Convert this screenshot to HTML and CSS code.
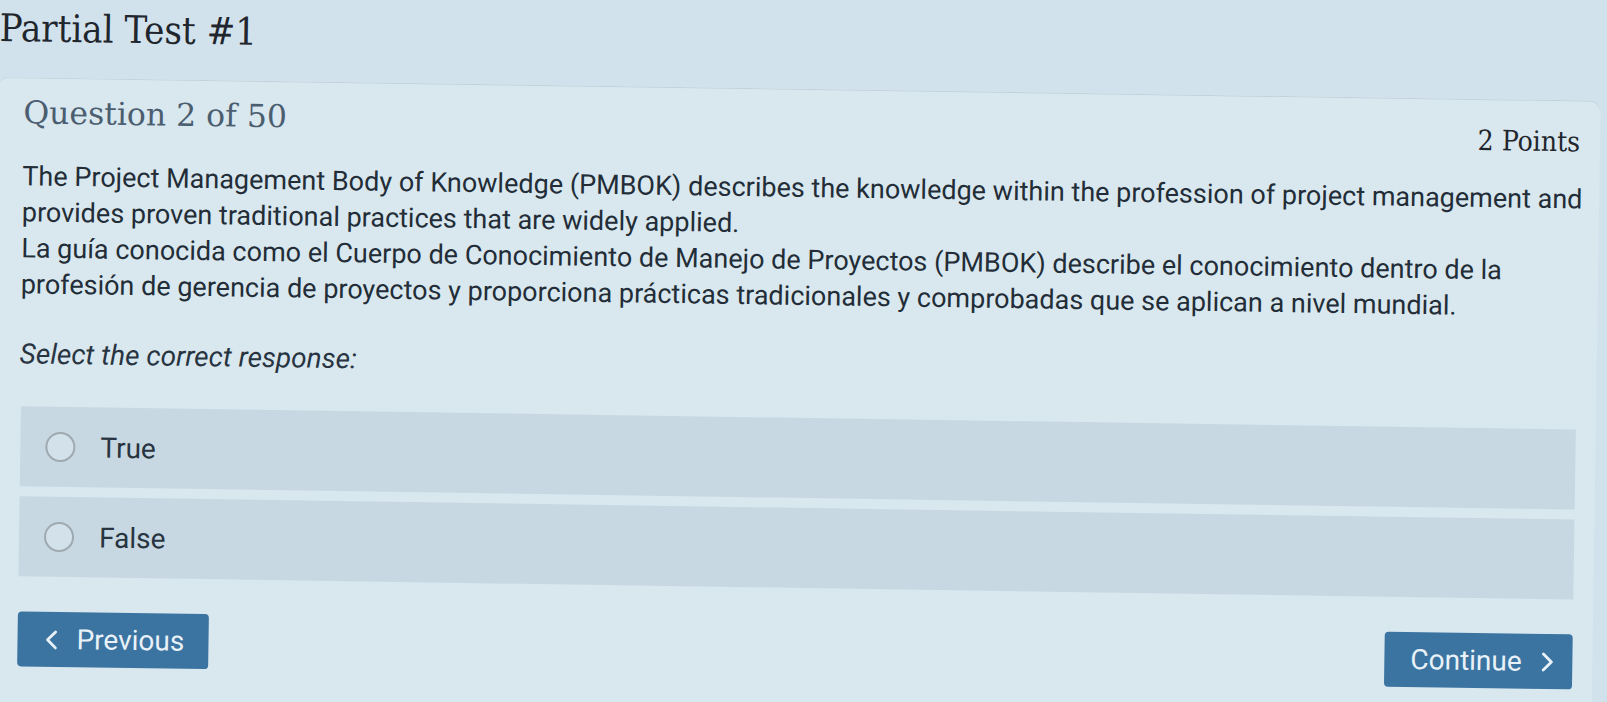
FILE: index.html
```html
<!DOCTYPE html>
<html lang="en">
<head>
<meta charset="utf-8">
<title>Partial Test #1</title>
<link rel="stylesheet" href="styles.css">
</head>
<body>
<div class="screen">
  <h1 class="page-title">Partial Test #1</h1>
  <main class="card">
    <div class="card-head">
      <h2 class="q-num">Question 2 of 50</h2>
      <div class="points">2 Points</div>
    </div>
    <div class="q-text">
      <p>The Project Management Body of Knowledge (PMBOK) describes the knowledge within the profession of project management and provides proven traditional practices that are widely applied.<br>La guía conocida como el Cuerpo de Conocimiento de Manejo de Proyectos (PMBOK) describe el conocimiento dentro de la profesión de gerencia de proyectos y proporciona prácticas tradicionales y comprobadas que se aplican a nivel mundial.</p>
    </div>
    <p class="prompt">Select the correct response:</p>
    <div class="options">
      <label class="option"><span class="radio"></span><span class="opt-label">True</span></label>
      <label class="option"><span class="radio"></span><span class="opt-label">False</span></label>
    </div>
    <div class="nav">
      <button class="btn btn-prev"><svg class="chev" viewBox="0 0 13 20" width="13" height="20"><path d="M11 2 L3 10 L11 18" fill="none" stroke="currentColor" stroke-width="2.8" stroke-linecap="round" stroke-linejoin="round"/></svg><span>Previous</span></button>
      <button class="btn btn-next"><span>Continue</span><svg class="chev" viewBox="0 0 13 20" width="13" height="20"><path d="M2 2 L10 10 L2 18" fill="none" stroke="currentColor" stroke-width="2.8" stroke-linecap="round" stroke-linejoin="round"/></svg></button>
    </div>
  </main>
</div>
</body>
</html>
```

FILE: styles.css
```css
html, body {
  margin: 0;
  padding: 0;
}
body {
  background: #d2e2ec;
  font-family: Roboto, "Noto Sans", sans-serif;
  color: #222d37;
  width: 1607px;
  height: 702px;
  overflow: hidden;
}
.screen {
  width: 1607px;
  transform: rotate(0.85deg);
  transform-origin: 0 0;
}
.page-title {
  margin: 0 0 25px 0;
  padding-top: 4px;
  font-family: "DejaVu Serif Condensed", "DejaVu Serif", serif;
  font-weight: normal;
  font-size: 38px;
  line-height: 48px;
  color: #1f262d;
}
.card {
  background: #d9e7ef;
  border-top: 1px solid #c2d1da;
  border-radius: 9px 12px 0 0;
  margin-right: 5px;
  padding: 14px 16px 40px 25px;
}
.card-head {
  display: flex;
  justify-content: space-between;
  align-items: flex-start;
}
.q-num {
  margin: 0;
  font-family: "DejaVu Serif", serif;
  font-weight: normal;
  font-size: 31.5px;
  line-height: 40px;
  color: #4b5e70;
}
.points {
  margin-top: 10px;
  margin-right: 4px;
  font-family: "DejaVu Serif Condensed", "DejaVu Serif", serif;
  font-size: 28px;
  line-height: 34px;
  color: #1f262d;
}
.q-text p {
  margin: 22px 0 0 0;
  font-size: 27px;
  line-height: 36px;
  color: #222d37;
}
.prompt {
  margin: 34px 0 0 0;
  font-style: italic;
  font-size: 28px;
  line-height: 36px;
  color: #28343f;
}
.options {
  margin: 34px 4px 0 2px;
  display: flex;
  flex-direction: column;
  gap: 10px;
}
.option {
  display: flex;
  align-items: center;
  background: #c7d8e3;
  height: 80px;
  padding-left: 25px;
}
.radio {
  width: 30px;
  height: 30px;
  border: 2px solid #9ea9b0;
  border-radius: 50%;
  box-sizing: border-box;
  background: #d3e1ea;
  flex: none;
}
.opt-label {
  margin-left: 25px;
  font-size: 28px;
  color: #28343f;
}
.nav {
  display: flex;
  justify-content: space-between;
  align-items: flex-start;
  margin: 35px 4px 0 2px;
}
.btn {
  display: inline-flex;
  align-items: center;
  background: #3b74a1;
  color: #e9f2f8;
  border: none;
  border-radius: 4px;
  font-family: Roboto, "Noto Sans", sans-serif;
  font-size: 28px;
  height: 55px;
  padding: 0;
}
.btn-prev {
  width: 191px;
  padding-left: 27px;
  gap: 19px;
}
.btn-next {
  width: 188px;
  padding-left: 26px;
  gap: 20px;
}
.chev {
  width: 13px;
  height: 20px;
  flex: none;
}
```
